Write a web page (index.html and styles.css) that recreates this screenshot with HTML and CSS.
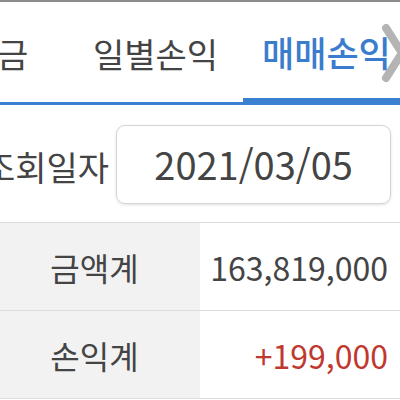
FILE: index.html
```html
<!DOCTYPE html>
<html lang="ko">
<head>
<meta charset="utf-8">
<link rel="stylesheet" href="styles.css">
</head>
<body>
<div class="page">
  <div class="topline"></div>
  <nav class="tabs">
    <svg class="more" width="26" height="60" viewBox="0 0 26 60"><polyline points="5,5 21,30 5,55" fill="none" stroke="#b4b4b4" stroke-width="8" stroke-linejoin="round" stroke-linecap="round"/></svg>
    <div class="tab tab-first">금</div>
    <div class="tab tab-mid">일별손익</div>
    <div class="tab tab-active">매매손익</div>
  </nav>
  <div class="search">
    <div class="label">조회일자</div>
    <div class="datebox">2021/03/05</div>
  </div>
  <div class="table">
    <div class="row">
      <div class="head">금액계</div>
      <div class="val">163,819,000</div>
    </div>
    <div class="row">
      <div class="head">손익계</div>
      <div class="val red">+199,000</div>
    </div>
  </div>
</div>
</body>
</html>
```
FILE: styles.css
```css
* { box-sizing: border-box; }
html, body { margin: 0; padding: 0; background: #fff; }
body {
  width: 400px;
  height: 400px;
  overflow: hidden;
  font-family: "Noto Sans CJK KR", "Noto Sans", sans-serif;
  color: #444;
}
.page { width: 400px; }
.topline { height: 2px; background: #8c8c8c; }
.tabs {
  position: relative;
  display: flex;
  height: 103px;
  border-bottom: 3px solid #3b7fd0;
  align-items: stretch;
}
.tab {
  position: relative;
  z-index: 1;
  flex-shrink: 0;
  display: flex;
  align-items: center;
  font-size: 34px;
  line-height: 1;
  padding-top: 3px;
}
.tab-first { width: 76px; justify-content: flex-start; margin-left: -3px; }
.tab-mid { width: 170px; justify-content: flex-start; padding-left: 20px; }
.tab-active {
  width: 170px;
  color: #3a7ccd;
  font-weight: 500;
  font-size: 35px;
  justify-content: flex-start;
  padding-left: 19px;
  margin-bottom: -3px;
  border-bottom: 7px solid #3b7fd0;
}
.more { position: absolute; left: 381px; top: 21px; z-index: 0; }
.search {
  display: flex;
  align-items: center;
  margin-top: 20px;
  margin-left: -16px;
  gap: 7px;
}
.label { font-size: 34px; line-height: 1; padding-top: 4px; flex-shrink: 0; }
.datebox {
  flex-shrink: 0;
  width: 275px;
  height: 79px;
  border: 1px solid #d5d5d5;
  border-radius: 9px;
  box-shadow: 0 1px 3px rgba(0,0,0,0.12);
  display: flex;
  align-items: center;
  justify-content: center;
  font-size: 38px;
  color: #444;
  padding-bottom: 2px;
}
.table {
  margin-top: 18px;
  border-top: 1px solid #dcdcdc;
}
.row {
  display: flex;
  height: 88px;
  border-bottom: 1px solid #dcdcdc;
}
.head {
  width: 200px;
  background: #f2f2f2;
  display: flex;
  align-items: center;
  justify-content: center;
  font-size: 32px;
  padding-right: 11px;
}
.val {
  flex: 1;
  display: flex;
  align-items: center;
  justify-content: flex-end;
  padding-right: 12px;
  font-size: 32px;
}
.red { color: #c0392f; }
```
